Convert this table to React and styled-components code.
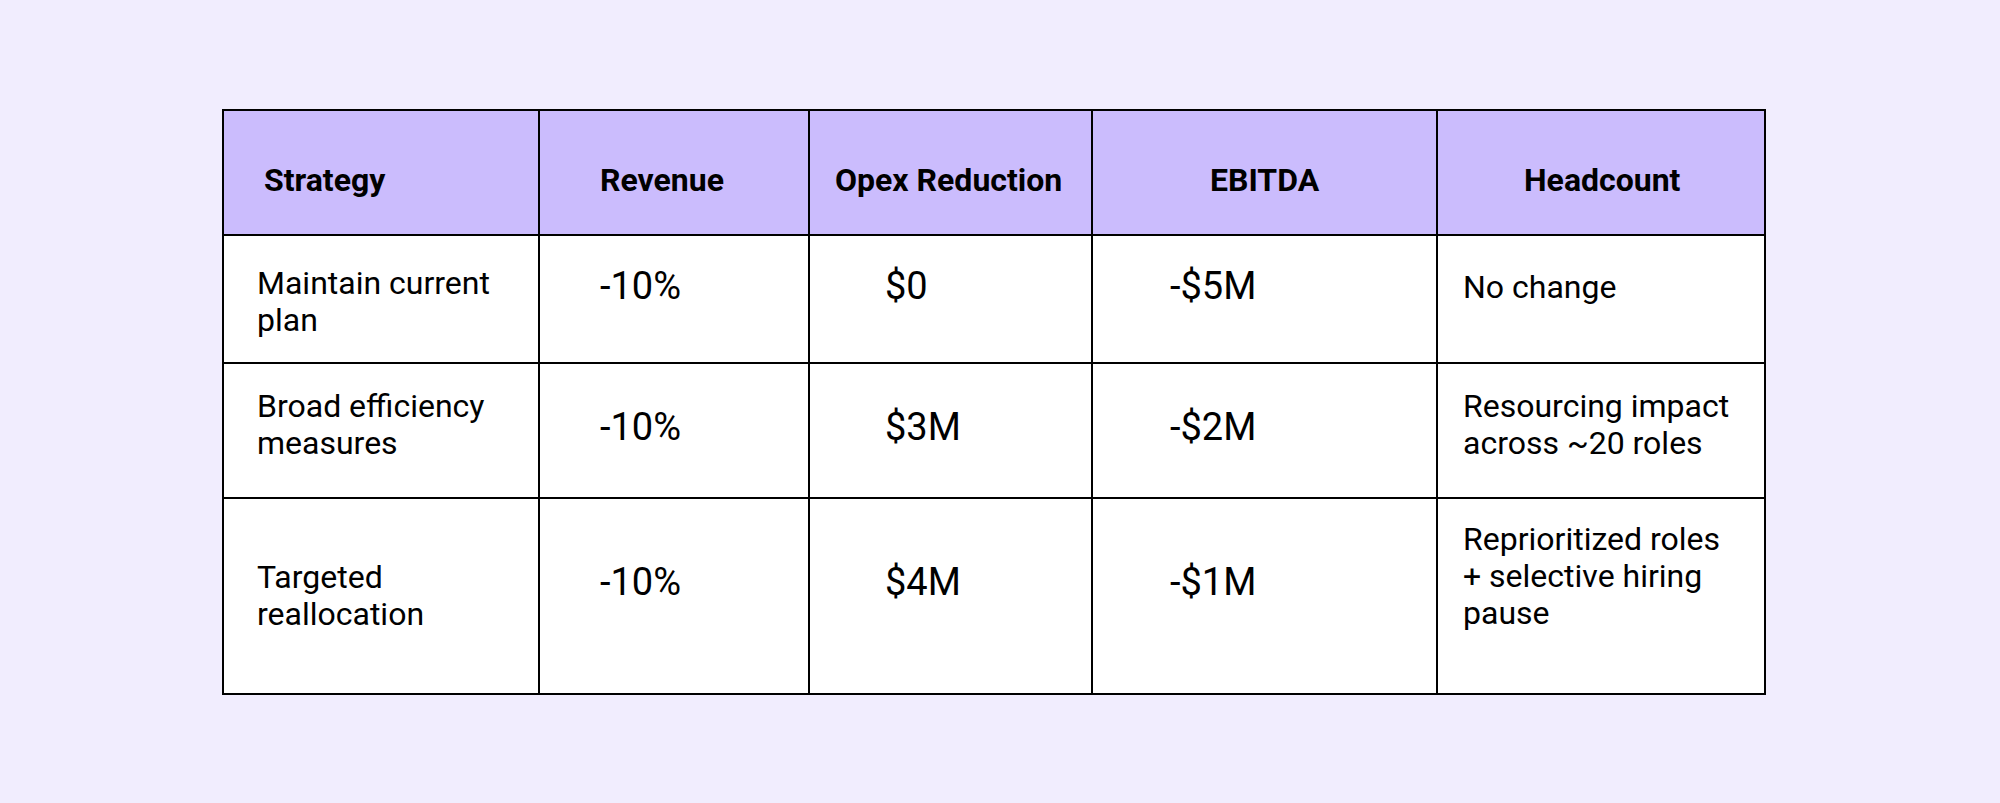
import React from 'react';
import styled, { createGlobalStyle } from 'styled-components';

const GlobalStyle = createGlobalStyle`
  html, body {
    margin: 0;
    padding: 0;
    background: #f1edfe;
  }
  body {
    font-family: Roboto, "Liberation Sans", Arial, sans-serif;
    color: #000000;
  }
`;

const Page = styled.div`
  box-sizing: border-box;
  width: 2000px;
  height: 803px;
  padding: 109px 0 0 222px;
  background: #f1edfe;
`;

// black background + 2px gaps give the cell borders
const Table = styled.div`
  display: grid;
  grid-template-columns: 314px 268px 281px 343px 326px;
  grid-template-rows: 123px 126px 133px 194px;
  gap: 2px;
  padding: 2px;
  width: fit-content;
  background: #000000;
`;

const HeadCell = styled.div`
  box-sizing: border-box;
  background: #cbbcfd;
  padding: 50px 0 0 ${(p) => p.$pl}px;
  font-size: 32px;
  line-height: 38px;
  font-weight: 700;
  white-space: nowrap;
`;

const Cell = styled.div`
  box-sizing: border-box;
  background: #ffffff;
  padding: ${(p) => p.$pt}px 4px 0 ${(p) => p.$pl}px;
  font-size: 32px;
  line-height: 37px;
  white-space: nowrap;
`;

const Figure = styled(Cell)`
  font-size: 38px;
  line-height: 46px;
`;

const columns = [
  { title: 'Strategy', pad: 40 },
  { title: 'Revenue', pad: 60 },
  { title: 'Opex Reduction', pad: 25 },
  { title: 'EBITDA', pad: 117 },
  { title: 'Headcount', pad: 86 },
];

const rows = [
  {
    strategy: ['Maintain current', 'plan'],
    revenue: '-10%',
    opex: '$0',
    ebitda: '-$5M',
    headcount: ['No change'],
    textTop: 29,
    figTop: 27,
    headTop: 33,
  },
  {
    strategy: ['Broad efficiency', 'measures'],
    revenue: '-10%',
    opex: '$3M',
    ebitda: '-$2M',
    headcount: ['Resourcing impact', 'across ~20 roles'],
    textTop: 24,
    figTop: 40,
    headTop: 24,
  },
  {
    strategy: ['Targeted', 'reallocation'],
    revenue: '-10%',
    opex: '$4M',
    ebitda: '-$1M',
    headcount: ['Reprioritized roles', '+ selective hiring', 'pause'],
    textTop: 60,
    figTop: 60,
    headTop: 22,
  },
];

function Lines({ items }) {
  return items.map((line, i) => <div key={i}>{line}</div>);
}

export default function App() {
  return (
    <Page>
      <GlobalStyle />
      <Table>
        {columns.map((c) => (
          <HeadCell key={c.title} $pl={c.pad}>
            {c.title}
          </HeadCell>
        ))}

        {rows.map((r, i) => (
          <React.Fragment key={i}>
            <Cell $pt={r.textTop} $pl={33}>
              <Lines items={r.strategy} />
            </Cell>
            <Figure $pt={r.figTop} $pl={60}>{r.revenue}</Figure>
            <Figure $pt={r.figTop} $pl={75}>{r.opex}</Figure>
            <Figure $pt={r.figTop} $pl={77}>{r.ebitda}</Figure>
            <Cell $pt={r.headTop} $pl={25}>
              <Lines items={r.headcount} />
            </Cell>
          </React.Fragment>
        ))}
      </Table>
    </Page>
  );
}
